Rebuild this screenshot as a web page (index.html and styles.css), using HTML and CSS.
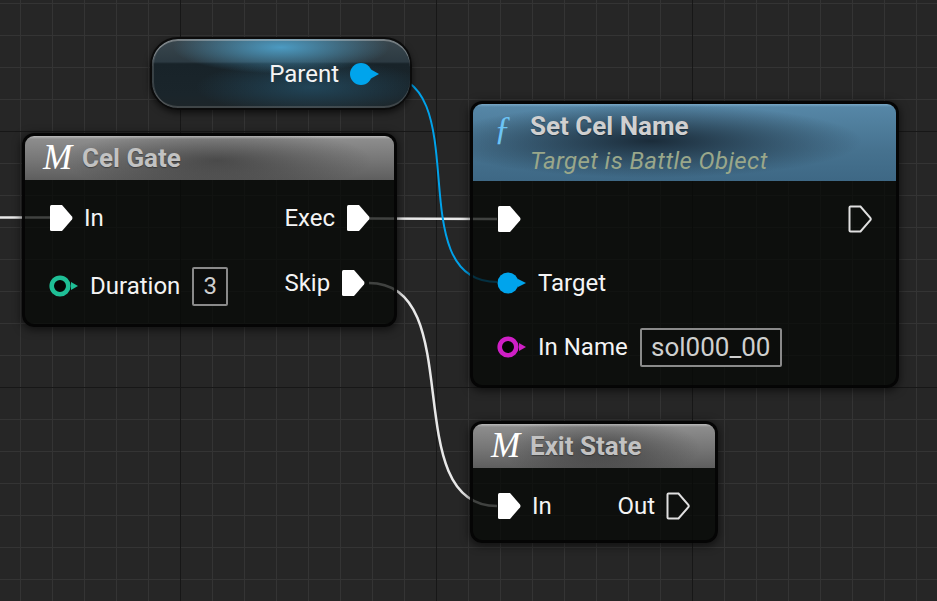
FILE: index.html
```html
<!DOCTYPE html>
<html>
<head>
<meta charset="utf-8">
<title>Blueprint graph</title>
<link rel="stylesheet" href="styles.css">
</head>
<body>
<div class="graph">
  <svg class="wires" width="937" height="601" viewBox="0 0 937 601">
    <path class="wire" d="M0 217.5H50"/>
    <path class="wire" d="M369 218.5C430 218.5 436 219 497 219"/>
    <path class="wire" d="M369 283C470 283 396 506 497 506"/>
    <path class="wire wire-obj" d="M380 74C480 74 397 282 497 282"/>
  </svg>

  <div class="var-node">
    <span class="pin-label">Parent</span>
    <svg class="pin" width="30" height="24" viewBox="0 0 30 24"><circle cx="11" cy="12" r="11" fill="#00a4ec"/><path d="M21 7.5L29 12L21 16.5Z" fill="#00a4ec"/></svg>
  </div>

  <div class="node node-gate">
    <div class="node-header header-grey">
      <span class="icon-macro">M</span>
      <span class="node-title">Cel Gate</span>
    </div>
    <div class="node-body">
      <div class="pin-col col-gate-left">
        <div class="pin-row">
          <svg class="pin" width="24" height="28" viewBox="0 0 24 28"><path d="M2.5 1H13L23 12.6Q24 14 23 15.4L13 27H2.5Q1 27 1 25.5V2.5Q1 1 2.5 1Z" fill="#fff"/></svg>
          <span class="pin-label">In</span>
        </div>
        <div class="pin-row">
          <svg class="pin" width="30" height="24" viewBox="0 0 30 24"><circle cx="11" cy="12" r="8.3" fill="#050605" stroke="#1fbf96" stroke-width="4.6"/><path d="M22 8L29 12L22 16Z" fill="#1fbf96"/></svg>
          <span class="pin-label">Duration</span>
          <span class="input-box box-num">3</span>
        </div>
      </div>
      <div class="pin-col col-gate-right">
        <div class="pin-row">
          <span class="pin-label">Exec</span>
          <svg class="pin" width="24" height="28" viewBox="0 0 24 28"><path d="M2.5 1H13L23 12.6Q24 14 23 15.4L13 27H2.5Q1 27 1 25.5V2.5Q1 1 2.5 1Z" fill="#fff"/></svg>
        </div>
        <div class="pin-row">
          <span class="pin-label">Skip</span>
          <svg class="pin" width="24" height="28" viewBox="0 0 24 28"><path d="M2.5 1H13L23 12.6Q24 14 23 15.4L13 27H2.5Q1 27 1 25.5V2.5Q1 1 2.5 1Z" fill="#fff"/></svg>
        </div>
      </div>
    </div>
  </div>

  <div class="node node-setcel">
    <div class="node-header header-blue">
      <span class="icon-func">ƒ</span>
      <div class="title-stack">
        <span class="node-title title-light">Set Cel Name</span>
        <span class="node-subtitle">Target is Battle Object</span>
      </div>
    </div>
    <div class="node-body">
      <div class="pin-col col-set-left">
        <div class="pin-row">
          <svg class="pin" width="24" height="28" viewBox="0 0 24 28"><path d="M2.5 1H13L23 12.6Q24 14 23 15.4L13 27H2.5Q1 27 1 25.5V2.5Q1 1 2.5 1Z" fill="#fff"/></svg>
        </div>
        <div class="pin-row">
          <svg class="pin" width="30" height="22" viewBox="0 0 30 22"><circle cx="11" cy="11" r="10.5" fill="#00a4ec"/><path d="M21 7L29 11L21 15Z" fill="#00a4ec"/></svg>
          <span class="pin-label">Target</span>
        </div>
        <div class="pin-row">
          <svg class="pin" width="30" height="24" viewBox="0 0 30 24"><circle cx="11" cy="12" r="8.3" fill="#050605" stroke="#cf1fc6" stroke-width="4.6"/><path d="M22 8L29 12L22 16Z" fill="#cf1fc6"/></svg>
          <span class="pin-label">In Name</span>
          <span class="input-box box-text">sol000_00</span>
        </div>
      </div>
      <div class="pin-col">
        <div class="pin-row">
          <svg class="pin" width="24" height="28" viewBox="0 0 24 28"><path d="M2.5 1.5H12.5L22.3 12.8Q23.2 14 22.3 15.2L12.5 26.5H2.5Q1.5 26.5 1.5 25.5V2.5Q1.5 1.5 2.5 1.5Z" fill="none" stroke="#e0e0e0" stroke-width="2"/></svg>
        </div>
      </div>
    </div>
  </div>

  <div class="node node-exit">
    <div class="node-header header-grey">
      <span class="icon-macro">M</span>
      <span class="node-title">Exit State</span>
    </div>
    <div class="node-body body-exit">
      <div class="pin-col">
        <div class="pin-row">
          <svg class="pin" width="24" height="28" viewBox="0 0 24 28"><path d="M2.5 1H13L23 12.6Q24 14 23 15.4L13 27H2.5Q1 27 1 25.5V2.5Q1 1 2.5 1Z" fill="#fff"/></svg>
          <span class="pin-label">In</span>
        </div>
      </div>
      <div class="pin-col">
        <div class="pin-row">
          <span class="pin-label">Out</span>
          <svg class="pin" width="24" height="28" viewBox="0 0 24 28"><path d="M2.5 1.5H12.5L22.3 12.8Q23.2 14 22.3 15.2L12.5 26.5H2.5Q1.5 26.5 1.5 25.5V2.5Q1.5 1.5 2.5 1.5Z" fill="none" stroke="#e0e0e0" stroke-width="2"/></svg>
        </div>
      </div>
    </div>
  </div>
</div>
</body>
</html>
```

FILE: styles.css
```css
* { box-sizing: border-box; }

html, body {
  margin: 0;
  padding: 0;
  background: #262626;
  overflow: hidden;
}

body {
  font-family: Roboto, "Noto Sans", "Liberation Sans", sans-serif;
  color: #f2f2f2;
}

.graph {
  position: relative;
  width: 937px;
  height: 601px;
  overflow: hidden;
  background-color: #262626;
  background-image:
    linear-gradient(to right, #171717 1px, transparent 1px),
    linear-gradient(to bottom, #171717 1px, transparent 1px),
    linear-gradient(to right, #343434 1px, transparent 1px),
    linear-gradient(to bottom, #343434 1px, transparent 1px);
  background-size: 256px 256px, 256px 256px, 32px 32px, 32px 32px;
  background-position: 180px 0, 0 131px, 20px 0, 0 3px;
}

.wires {
  position: absolute;
  left: 0;
  top: 0;
}

.wire {
  fill: none;
  stroke: #e8e8e8;
  stroke-width: 2.5;
}

.wire-obj {
  stroke: #00a2ea;
  stroke-width: 2;
}

.pin { display: block; flex: none; }

.pin-label {
  font-size: 24px;
  line-height: 28px;
  color: #f4f4f4;
  white-space: nowrap;
}

/* variable getter */
.var-node {
  position: absolute;
  left: 150px;
  top: 37px;
  width: 262px;
  height: 73px;
  border: 2px solid #0b0b0b;
  border-radius: 28px;
  display: flex;
  align-items: center;
  justify-content: flex-end;
  gap: 11px;
  padding-right: 30px;
  background:
    radial-gradient(ellipse 42% 38% at 50% 12%, rgba(80,170,215,0.85), rgba(80,170,215,0) 100%),
    radial-gradient(ellipse 45% 40% at 62% 70%, rgba(40,95,125,0.55), rgba(40,95,125,0) 100%),
    linear-gradient(to bottom, #3a474e 0%, #2c3a42 33%, #182329 36%, #1a252b 80%, #1d2529 100%);
  box-shadow:
    inset 0 2px 0 rgba(210,210,210,0.4),
    inset 0 -2px 0 rgba(130,130,130,0.35),
    inset 2px 0 0 rgba(150,150,150,0.25),
    0 3px 6px rgba(0,0,0,0.6);
}

/* generic node */
.node {
  position: absolute;
  border: 3px solid rgba(4,4,4,0.88);
  border-radius: 12px;
  background: rgba(6,8,6,0.74);
  box-shadow: 0 2px 8px 1px rgba(0,0,0,0.55);
}

.node-gate { left: 22px; top: 133px; width: 375px; }
.node-setcel { left: 470px; top: 101px; width: 429px; }
.node-exit { left: 470px; top: 421px; width: 248px; }

.node-header {
  display: flex;
  align-items: center;
  border-radius: 9px 9px 0 0;
}

.header-grey {
  height: 44px;
  padding-left: 18px;
  gap: 12px;
  background:
    linear-gradient(to bottom, rgba(255,255,255,0.38) 0, rgba(255,255,255,0) 3px),
    radial-gradient(ellipse 42% 75% at 52% 55%, rgba(20,20,20,0.45), rgba(20,20,20,0) 100%),
    linear-gradient(to bottom, #909090 0%, #767676 55%, #5e5e5e 100%);
}

.header-blue {
  align-items: flex-start;
  padding: 7px 0 6px 21px;
  gap: 15px;
  background:
    linear-gradient(to bottom, rgba(160,205,235,0.45) 0, rgba(160,205,235,0) 3px),
    radial-gradient(ellipse 50% 48% at 42% 48%, rgba(22,36,48,0.9), rgba(22,36,48,0) 100%),
    linear-gradient(to bottom, #5788a8 0%, #46728f 60%, #3e6885 100%);
}

.icon-macro {
  font-family: "Liberation Serif", "DejaVu Serif", serif;
  font-style: italic;
  font-size: 35px;
  line-height: 34px;
  color: #ffffff;
  width: 27px;
}

.icon-func {
  font-family: "Liberation Serif", "DejaVu Serif", serif;
  font-style: italic;
  font-size: 34px;
  line-height: 34px;
  color: #6cc4f6;
  width: 21px;
}

.title-stack {
  display: flex;
  flex-direction: column;
  gap: 7px;
}

.node-title {
  font-weight: 700;
  font-size: 26px;
  line-height: 30px;
  color: #c2c2c2;
  text-shadow: 0 1px 1px rgba(0,0,0,0.35);
  white-space: nowrap;
}

.title-light { color: #d0d0d0; }

.node-subtitle {
  font-style: italic;
  font-size: 24px;
  line-height: 27px;
  letter-spacing: 0.4px;
  color: #9aa78a;
  white-space: nowrap;
}

.node-body {
  display: flex;
  justify-content: space-between;
  padding: 18px 24px 18px 24px;
}

.body-exit { padding: 18px 25px 14px 24px; }

.pin-col {
  display: flex;
  flex-direction: column;
  gap: 24px;
}

.col-gate-left { gap: 28px; }
.col-gate-right { gap: 25px; }
.col-set-left { gap: 24px; }

.pin-row {
  height: 40px;
  display: flex;
  align-items: center;
  gap: 11px;
}

.input-box {
  height: 39px;
  display: flex;
  align-items: center;
  justify-content: center;
  border: 2px solid #8a8a8a;
  border-radius: 2px;
  background: #0c0d0c;
  color: #cfcfcf;
  margin-left: 1px;
}

.box-num {
  width: 36px;
  font-size: 24px;
}

.box-text {
  width: 142px;
  font-size: 26px;
}
```
